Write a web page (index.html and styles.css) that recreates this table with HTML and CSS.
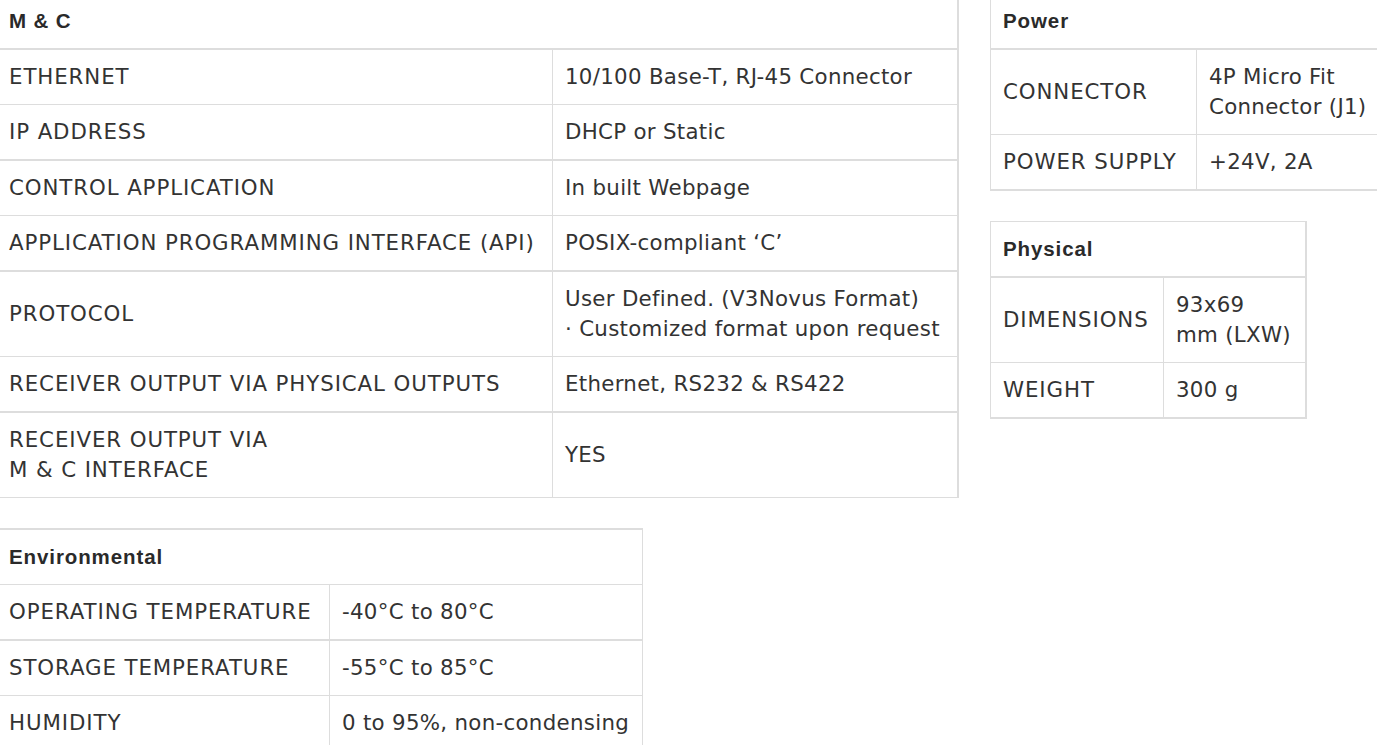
FILE: index.html
```html
<!DOCTYPE html>
<html lang="en">
<head>
<meta charset="utf-8">
<title>Specifications</title>
<link rel="stylesheet" href="styles.css">
</head>
<body>
<div class="page">
  <div class="col col-left">
    <table class="spec mc">
      <colgroup><col class="mc-k"><col class="mc-v"></colgroup>
      <tr><th colspan="2">M &amp; C</th></tr>
      <tr class="t"><td class="k">ETHERNET</td><td>10/100 Base-T, RJ-45 Connector</td></tr>
      <tr><td class="k">IP ADDRESS</td><td>DHCP or Static</td></tr>
      <tr class="t"><td class="k">CONTROL APPLICATION</td><td>In built Webpage</td></tr>
      <tr><td class="k">APPLICATION PROGRAMMING INTERFACE (API)</td><td>POSIX-compliant ‘C’</td></tr>
      <tr class="t"><td class="k">PROTOCOL</td><td>User Defined. (V3Novus Format)<br>· Customized format upon request</td></tr>
      <tr><td class="k">RECEIVER OUTPUT VIA PHYSICAL OUTPUTS</td><td>Ethernet, RS232 &amp; RS422</td></tr>
      <tr class="t last"><td class="k">RECEIVER OUTPUT VIA<br>M &amp; C INTERFACE</td><td>YES</td></tr>
    </table>
    <table class="spec env">
      <colgroup><col class="env-k"><col class="env-v"></colgroup>
      <tr class="t"><th colspan="2">Environmental</th></tr>
      <tr><td class="k">OPERATING TEMPERATURE</td><td>-40°C to 80°C</td></tr>
      <tr class="t"><td class="k">STORAGE TEMPERATURE</td><td>-55°C to 85°C</td></tr>
      <tr><td class="k">HUMIDITY</td><td>0 to 95%, non-condensing</td></tr>
    </table>
  </div>
  <div class="col col-right">
    <table class="spec power">
      <colgroup><col class="pw-k"><col class="pw-v"></colgroup>
      <tr><th colspan="2">Power</th></tr>
      <tr class="t"><td class="k">CONNECTOR</td><td>4P Micro Fit<br>Connector (J1)</td></tr>
      <tr><td class="k">POWER SUPPLY</td><td>+24V, 2A</td></tr>
    </table>
    <table class="spec phys">
      <colgroup><col class="ph-k"><col class="ph-v"></colgroup>
      <tr><th colspan="2">Physical</th></tr>
      <tr class="t"><td class="k">DIMENSIONS</td><td>93x69<br>mm (LXW)</td></tr>
      <tr><td class="k">WEIGHT</td><td>300 g</td></tr>
    </table>
  </div>
</div>
</body>
</html>
```

FILE: styles.css
```css
html, body {
  margin: 0;
  padding: 0;
  background: #ffffff;
}

body {
  overflow: hidden;
}

.page {
  display: flex;
  align-items: flex-start;
  gap: 31px;
  margin: -7px 0 0 -4px;
}

.col {
  display: flex;
  flex-direction: column;
  align-items: flex-start;
  gap: 30px;
  flex: none;
}

.col-left {
  width: 963px;
}

.col-right {
  width: 420px;
}

.spec {
  border-collapse: separate;
  border-spacing: 0;
  border: 1px solid #dddddd;
  table-layout: fixed;
  font-family: "DejaVu Sans", "Liberation Sans", sans-serif;
  font-size: 21.33px;
  line-height: 30px;
  letter-spacing: 0.3px;
  color: #333333;
}

.spec th,
.spec td {
  padding: 12px;
  border-right: 1px solid #dddddd;
  border-bottom: 1px solid #dddddd;
  text-align: left;
  vertical-align: middle;
  font-weight: normal;
}

.spec th {
  font-family: "Liberation Sans", Arial, sans-serif;
  font-weight: bold;
  font-size: 20.5px;
  letter-spacing: 0.9px;
  color: #2a2a2a;
}

.spec tr.t > th,
.spec tr.t > td {
  border-top: 1px solid #dddddd;
}

.spec td.k {
  letter-spacing: 0.9px;
}

.mc {
  width: 963px;
}

.mc tr.last > td {
  border-bottom: 0;
}

.mc-k { width: 556px; }
.mc-v { width: 405px; }

.env {
  width: 647px;
  border-right: 0;
}

.env-k { width: 333px; }
.env-v { width: 313px; }

.power {
  width: 420px;
}

.pw-k { width: 206px; }
.pw-v { width: 212px; }

.phys {
  width: 317px;
}

.ph-k { width: 173px; }
.ph-v { width: 142px; }
```
